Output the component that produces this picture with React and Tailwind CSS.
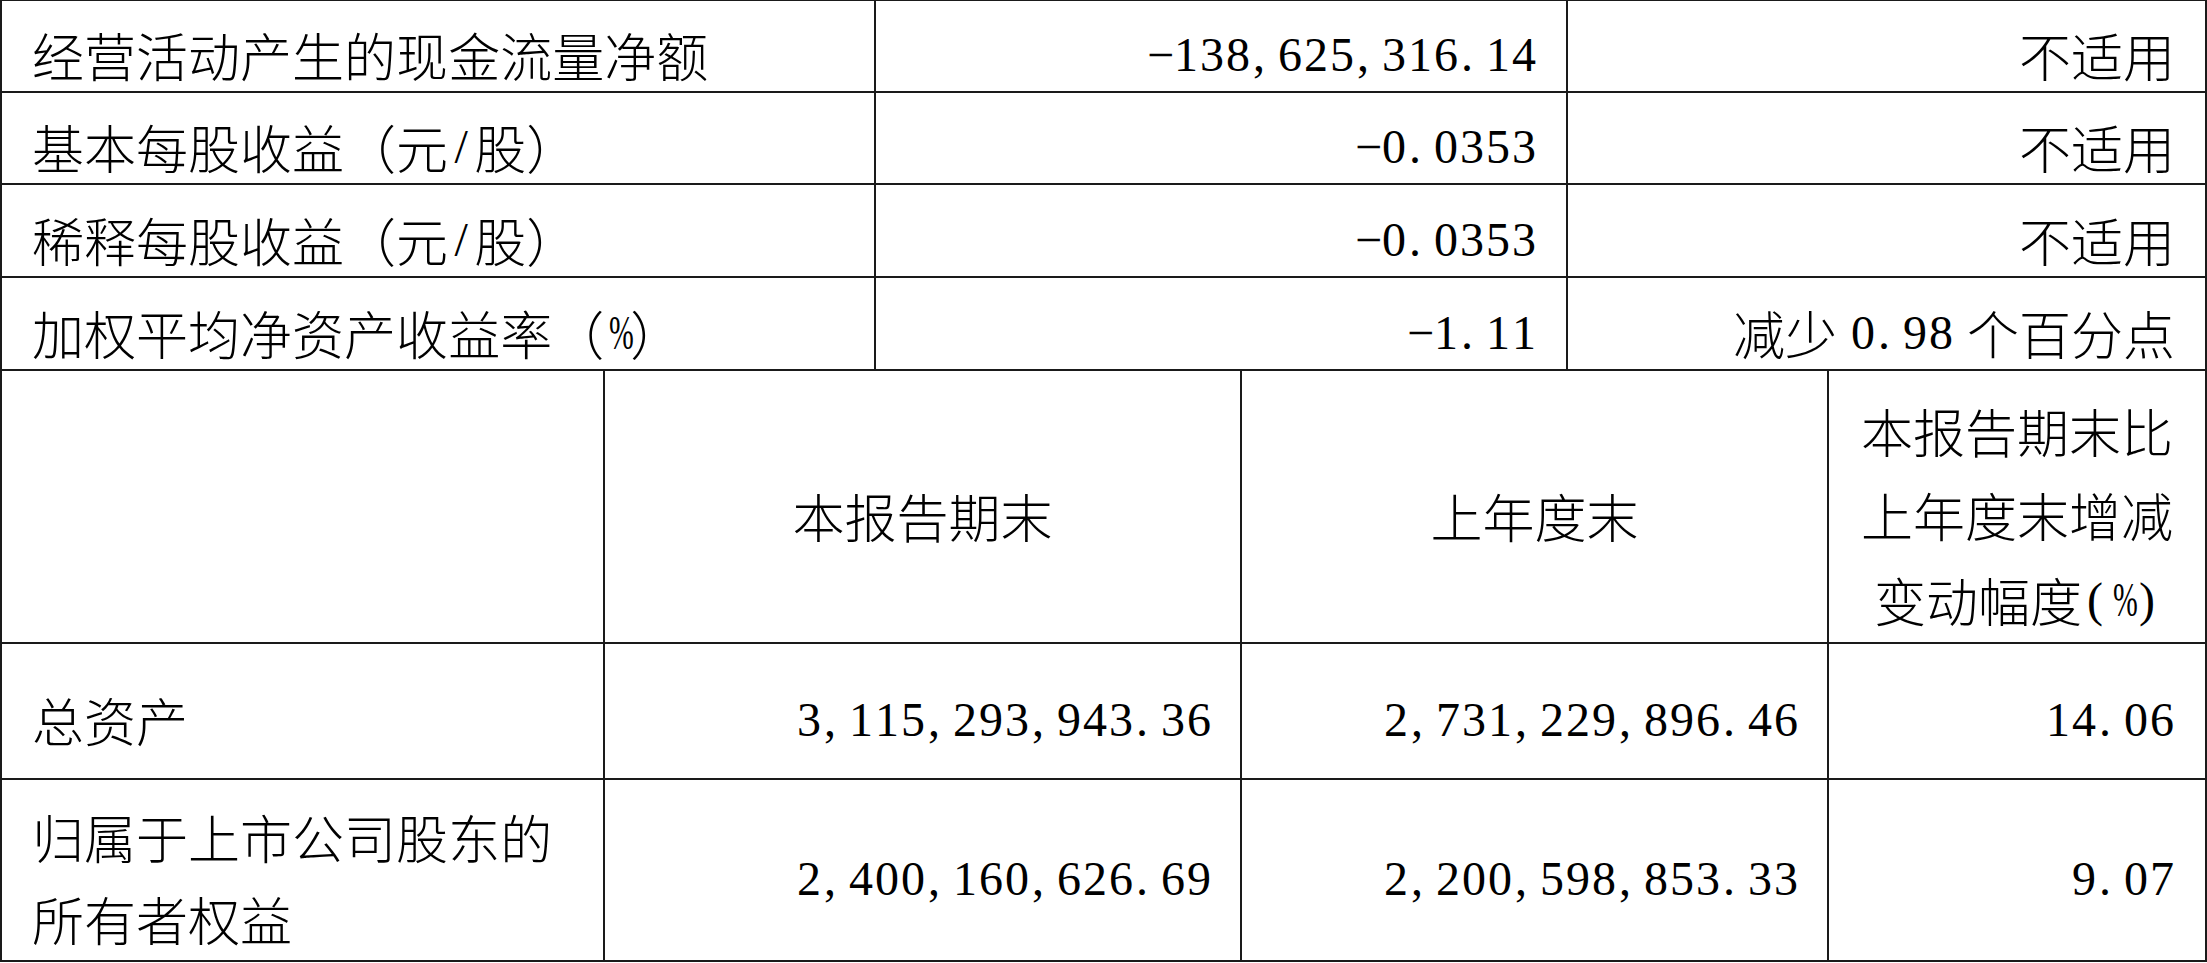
import React from "react";

function T({ s }) {
  return (
    <>
      {[...s].map((ch, i) => {
        if (ch === "," || ch === ".") {
          return (
            <span key={i} className="inline-block w-[26px] text-left pl-[2px] font-['Liberation_Serif'] text-[48px]">
              {ch}
            </span>
          );
        }
        if (ch === "-") {
          return (
            <span key={i} className="inline-block w-[26px] text-center font-['Liberation_Serif'] text-[48px]">
              −
            </span>
          );
        }
        if (ch === "%") {
          return (
            <span key={i} className="inline-block w-[26px] text-center font-['Liberation_Serif'] text-[48px] scale-x-[0.62]">
              %
            </span>
          );
        }
        if (ch === " ") {
          return (
            <span key={i} className="inline-block w-[13px]">
              {"\u00a0"}
            </span>
          );
        }
        if (ch.charCodeAt(0) < 128) {
          return (
            <span key={i} className="inline-block w-[26px] text-center font-['Liberation_Serif'] text-[48px]">
              {ch}
            </span>
          );
        }
        return <React.Fragment key={i}>{ch}</React.Fragment>;
      })}
    </>
  );
}

const top = [
  ["经营活动产生的现金流量净额", "-138,625,316.14", "不适用", "h-[93px] border-t"],
  ["基本每股收益（元/股）", "-0.0353", "不适用", "h-[92px]"],
  ["稀释每股收益（元/股）", "-0.0353", "不适用", "h-[93px]"],
  ["加权平均净资产收益率（%）", "-1.11", "减少 0.98 个百分点", "h-[93px]"],
];

export default function App() {
  return (
    <div className="w-[2207px] h-[963px] bg-white text-black font-['Noto_Sans_CJK_SC',sans-serif] font-light text-[52px] leading-none">
      {top.map(([a, b, c, h], i) => (
        <div key={i} className={`flex border-b-2 border-[#1a1a1a] ${h}`}>
          <div className="w-[876px] flex items-center pt-[18px] pl-[30px] border-l-2 border-r-2 border-[#1a1a1a] whitespace-nowrap">
            <T s={a} />
          </div>
          <div className="w-[692px] flex items-center justify-end pt-[18px] pr-[29px] border-r-2 border-[#1a1a1a] whitespace-nowrap">
            <T s={b} />
          </div>
          <div className="flex-1 flex items-center justify-end pt-[18px] pr-[30px] border-r-2 border-[#1a1a1a] whitespace-nowrap">
            <T s={c} />
          </div>
        </div>
      ))}

      <div className="flex h-[273px] border-b-2 border-[#1a1a1a]">
        <div className="w-[605px] border-l-2 border-r-2 border-[#1a1a1a]"></div>
        <div className="w-[637px] flex items-center justify-center pt-[18px] border-r-2 border-[#1a1a1a]">
          <T s="本报告期末" />
        </div>
        <div className="w-[587px] flex items-center justify-center pt-[18px] border-r-2 border-[#1a1a1a]">
          <T s="上年度末" />
        </div>
        <div className="flex-1 flex flex-col items-center justify-center pt-[18px] border-r-2 border-[#1a1a1a] whitespace-nowrap">
          <div className="h-[90px] flex items-center"><T s="本报告期末比" /></div>
          <div className="h-[90px] flex items-center"><T s="上年度末增减" /></div>
          <div className="h-[90px] flex items-center"><T s="变动幅度(%)" /></div>
        </div>
      </div>

      <div className="flex h-[136px] border-b-2 border-[#1a1a1a]">
        <div className="w-[605px] flex items-center pt-[18px] pl-[30px] border-l-2 border-r-2 border-[#1a1a1a]">
          <T s="总资产" />
        </div>
        <div className="w-[637px] flex items-center justify-end pt-[18px] pr-[28px] border-r-2 border-[#1a1a1a] whitespace-nowrap">
          <T s="3,115,293,943.36" />
        </div>
        <div className="w-[587px] flex items-center justify-end pt-[18px] pr-[28px] border-r-2 border-[#1a1a1a] whitespace-nowrap">
          <T s="2,731,229,896.46" />
        </div>
        <div className="flex-1 flex items-center justify-end pt-[18px] pr-[30px] border-r-2 border-[#1a1a1a]">
          <T s="14.06" />
        </div>
      </div>

      <div className="flex h-[182px] border-b-2 border-[#1a1a1a]">
        <div className="w-[605px] flex flex-col justify-center pt-[16px] pl-[30px] border-l-2 border-r-2 border-[#1a1a1a] whitespace-nowrap">
          <div className="h-[89px] flex items-center"><T s="归属于上市公司股东的" /></div>
          <div className="h-[89px] flex items-center"><T s="所有者权益" /></div>
        </div>
        <div className="w-[637px] flex items-center justify-end pt-[18px] pr-[28px] border-r-2 border-[#1a1a1a] whitespace-nowrap">
          <T s="2,400,160,626.69" />
        </div>
        <div className="w-[587px] flex items-center justify-end pt-[18px] pr-[28px] border-r-2 border-[#1a1a1a] whitespace-nowrap">
          <T s="2,200,598,853.33" />
        </div>
        <div className="flex-1 flex items-center justify-end pt-[18px] pr-[30px] border-r-2 border-[#1a1a1a]">
          <T s="9.07" />
        </div>
      </div>
    </div>
  );
}
